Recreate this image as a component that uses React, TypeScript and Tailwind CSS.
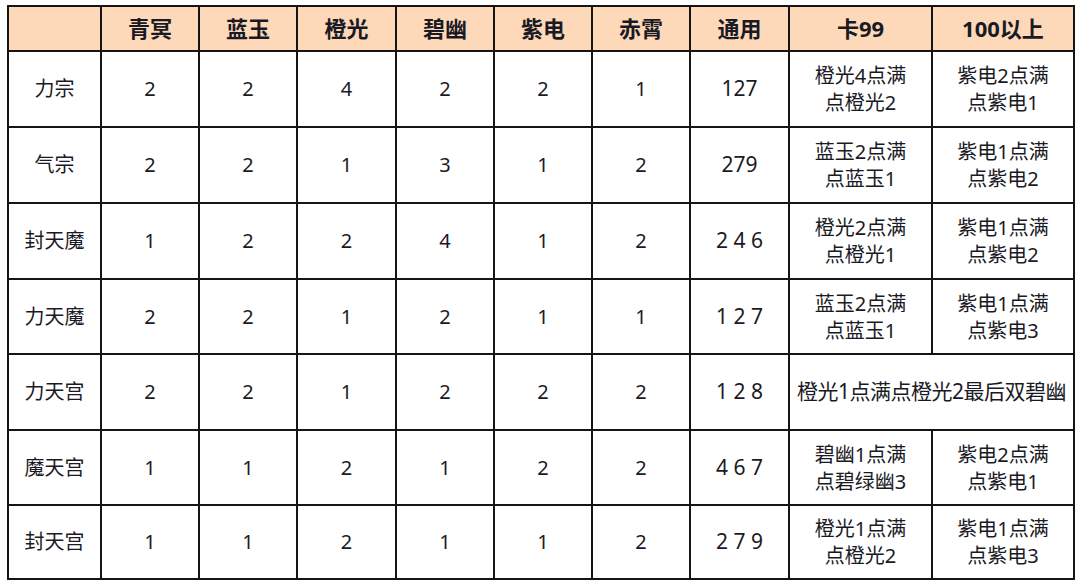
import { Fragment } from "react";

const headers = ["", "青冥", "蓝玉", "橙光", "碧幽", "紫电", "赤霄", "通用", "卡99", "100以上"];

type Row = {
  name: string;
  vals: string[];
  total: string;
  ka?: string[];
  over?: string[];
  merged?: string;
};

const rows: Row[] = [
  { name: "力宗", vals: ["2", "2", "4", "2", "2", "1"], total: "127", ka: ["橙光4点满", "点橙光2"], over: ["紫电2点满", "点紫电1"] },
  { name: "气宗", vals: ["2", "2", "1", "3", "1", "2"], total: "279", ka: ["蓝玉2点满", "点蓝玉1"], over: ["紫电1点满", "点紫电2"] },
  { name: "封天魔", vals: ["1", "2", "2", "4", "1", "2"], total: "2 4 6", ka: ["橙光2点满", "点橙光1"], over: ["紫电1点满", "点紫电2"] },
  { name: "力天魔", vals: ["2", "2", "1", "2", "1", "1"], total: "1 2 7", ka: ["蓝玉2点满", "点蓝玉1"], over: ["紫电1点满", "点紫电3"] },
  { name: "力天宫", vals: ["2", "2", "1", "2", "2", "2"], total: "1 2 8", merged: "橙光1点满点橙光2最后双碧幽" },
  { name: "魔天宫", vals: ["1", "1", "2", "1", "2", "2"], total: "4 6 7", ka: ["碧幽1点满", "点碧绿幽3"], over: ["紫电2点满", "点紫电1"] },
  { name: "封天宫", vals: ["1", "1", "2", "1", "1", "2"], total: "2 7 9", ka: ["橙光1点满", "点橙光2"], over: ["紫电1点满", "点紫电3"] },
];

const cell = "bg-white flex flex-col items-center justify-center text-center";

export default function App() {
  return (
    <div
      className="w-[1080px] h-[584px] bg-white pl-[7px] pt-[5px] text-[#1a1a24]"
      style={{ fontFamily: '"Noto Sans", "Noto Sans CJK SC", sans-serif' }}
    >
      <div className="grid w-[1068px] gap-[2px] bg-[#151515] p-[2px] grid-cols-[91px_96px_96px_97px_96px_96px_96px_97px_141px_140px] grid-rows-[43px_74px_74px_74px_73px_74px_73px_72px]">
        {headers.map((h, i) => (
          <div key={i} className="bg-[#fdd8b9] flex items-center justify-center text-[22px] font-bold">
            {h}
          </div>
        ))}
        {rows.map((r) => (
          <Fragment key={r.name}>
            <div className={`${cell} text-[20px]`}>{r.name}</div>
            {r.vals.map((v, j) => (
              <div key={j} className={`${cell} text-[20px]`}>
                {v}
              </div>
            ))}
            <div className={`${cell} text-[21px]`}>{r.total}</div>
            {r.merged ? (
              <div className={`${cell} col-span-2 text-[21px] tracking-[-0.5px]`}>{r.merged}</div>
            ) : (
              <>
                <div className={`${cell} text-[20px] leading-[27px]`}>
                  {r.ka!.map((t) => (
                    <span key={t}>{t}</span>
                  ))}
                </div>
                <div className={`${cell} text-[20px] leading-[27px]`}>
                  {r.over!.map((t) => (
                    <span key={t}>{t}</span>
                  ))}
                </div>
              </>
            )}
          </Fragment>
        ))}
      </div>
    </div>
  );
}
